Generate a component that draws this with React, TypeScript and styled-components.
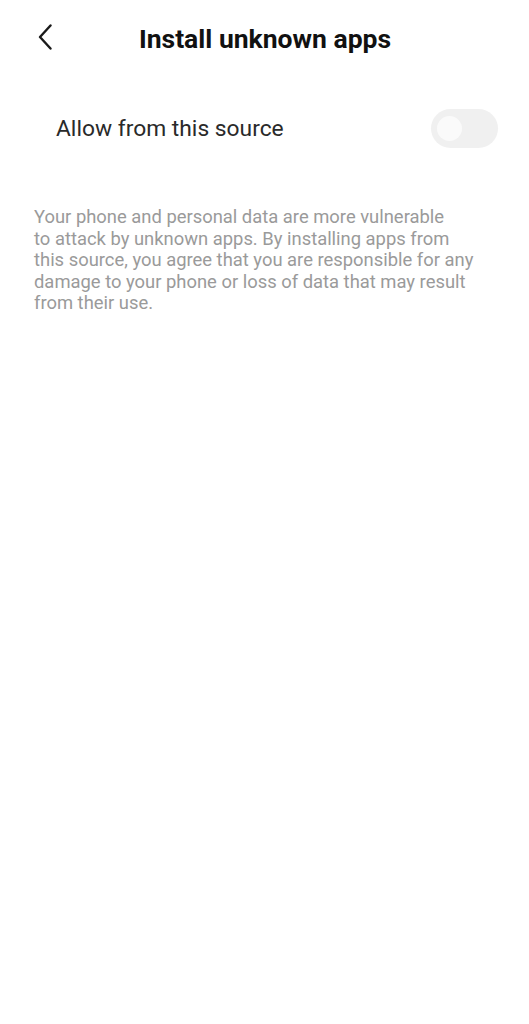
import styled, { createGlobalStyle } from 'styled-components';

const GlobalStyle = createGlobalStyle`
    html, body {
        margin: 0;
        padding: 0;
        background: #ffffff;
    }
    body {
        font-family: Roboto, "Noto Sans", sans-serif;
        -webkit-font-smoothing: antialiased;
    }
`;

export default function App() {
    return (
        <>
            <GlobalStyle />
            <Screen>
                <Header>
                    <BackButton aria-label="Back">
                        <svg width="16" height="26" viewBox="0 0 16 26" fill="none">
                            <path d="M13.5 1.5 L3 13 L13.5 24.5" stroke="#1a1a1a" strokeWidth="2.4" strokeLinecap="round" strokeLinejoin="round" />
                        </svg>
                    </BackButton>
                    <Title>Install unknown apps</Title>
                </Header>
                <SettingRow>
                    <Label>Allow from this source</Label>
                    <Switch />
                </SettingRow>
                <Note>
                    Your phone and personal data are more vulnerable<br />
                    to attack by unknown apps. By installing apps from<br />
                    this source, you agree that you are responsible for any<br />
                    damage to your phone or loss of data that may result<br />
                    from their use.
                </Note>
            </Screen>
        </>
    );
}

const Screen = styled.div`
    width: 529px;
    min-height: 1024px;
    background: #ffffff;
    display: flex;
    flex-direction: column;
`;

const Header = styled.header`
    position: relative;
    height: 76px;
    display: flex;
    align-items: center;
    justify-content: center;
`;

const BackButton = styled.button`
    position: absolute;
    left: 37px;
    top: 24px;
    padding: 0;
    border: none;
    background: none;
    display: flex;
`;

const Title = styled.h1`
    margin: 0 0 0 1px;
    font-size: 26.5px;
    font-weight: 700;
    color: #111111;
`;

const SettingRow = styled.div`
    display: flex;
    align-items: center;
    justify-content: space-between;
    height: 104px;
    padding: 0 31px 0 56px;
`;

const Label = styled.span`
    font-size: 22.8px;
    color: #2a2a2a;
`;

const Switch = styled.div`
    position: relative;
    width: 67px;
    height: 39px;
    border-radius: 20px;
    background: #f0f0f0;

    &::after {
        content: '';
        position: absolute;
        left: 6px;
        top: 7px;
        width: 25px;
        height: 25px;
        border-radius: 50%;
        background: #fafafa;
    }
`;

const Note = styled.p`
    margin: 26px 0 0;
    padding: 0 30px 0 34px;
    font-size: 18.4px;
    line-height: 21.6px;
    color: #9a9a9a;
    white-space: nowrap;
`;
